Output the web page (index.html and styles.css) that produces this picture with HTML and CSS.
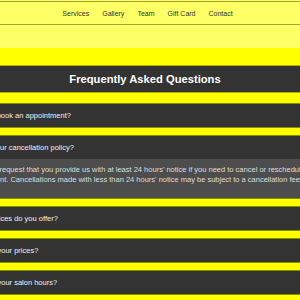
FILE: index.html
```html
<!DOCTYPE html>
<html lang="en">
<head>
<meta charset="utf-8">
<title>FAQ</title>
<link rel="stylesheet" href="styles.css">
</head>
<body>
<header class="top">
	<nav class="menu">
		<a href="#services">Services</a>
		<a href="#gallery">Gallery</a>
		<a href="#team">Team</a>
		<a href="#gift">Gift Card</a>
		<a href="#contact">Contact</a>
	</nav>
</header>
<main class="page">
	<section class="faq">
		<h2 class="faq-title">Frequently Asked Questions</h2>
		<div class="item">
			<div class="question">How do I book an appointment?</div>
		</div>
		<div class="item">
			<div class="question">What is your cancellation policy?</div>
			<p class="answer">We kindly request that you provide us with at least 24 hours' notice if you need to cancel or reschedule your appointment. Cancellations made with less than 24 hours' notice may be subject to a cancellation fee.</p>
		</div>
		<div class="item">
			<div class="question">What services do you offer?</div>
		</div>
		<div class="item">
			<div class="question">What are your prices?</div>
		</div>
		<div class="item">
			<div class="question">What are your salon hours?</div>
		</div>
	</section>
</main>
</body>
</html>
```

FILE: styles.css
```css
html, body { margin: 0px; padding: 0px; overflow: hidden; }
body { background-color: #FFFF00; font-family: "Liberation Sans", Arial, sans-serif; color: #333333; }

.top { background-color: #FFFF66; height: 48px; padding-top: 1px; box-sizing: border-box; }
.menu { display: flex; justify-content: center; align-items: center; gap: 13px;
        height: 22px; padding-right: 5px;
        border-top: 1px solid #A3A33D; border-bottom: 1px solid #A3A33D; }
.menu a { font-size: 7px; color: #333333; text-decoration: none; }

.page { display: flex; flex-direction: column; align-items: center; padding-top: 18px; }
.faq { width: 390px; flex-shrink: 0; margin-right: 10px; }

.faq-title { margin: 0px 0px 12px 0px; height: 26px; line-height: 27px;
             background-color: #333333; color: #FFFFFF; text-align: center;
             font-size: 11.2px; font-weight: bold;
             box-shadow: 0px 0px 0px 1px rgba(0, 0, 0, 0.3); }

.item { margin-bottom: 9px; box-shadow: 0px 0px 0px 1px rgba(0, 0, 0, 0.45); }
.question { height: 23px; line-height: 23px; padding: 0px 15px;
            background-color: #333333; color: #F0F0F0; font-size: 7.5px; }
.answer { margin: 0px; padding: 6px 15px 13px 15px; line-height: 10px;
          background-color: #4D4D4D; color: #DDDDDD; font-size: 7.5px; }
```
